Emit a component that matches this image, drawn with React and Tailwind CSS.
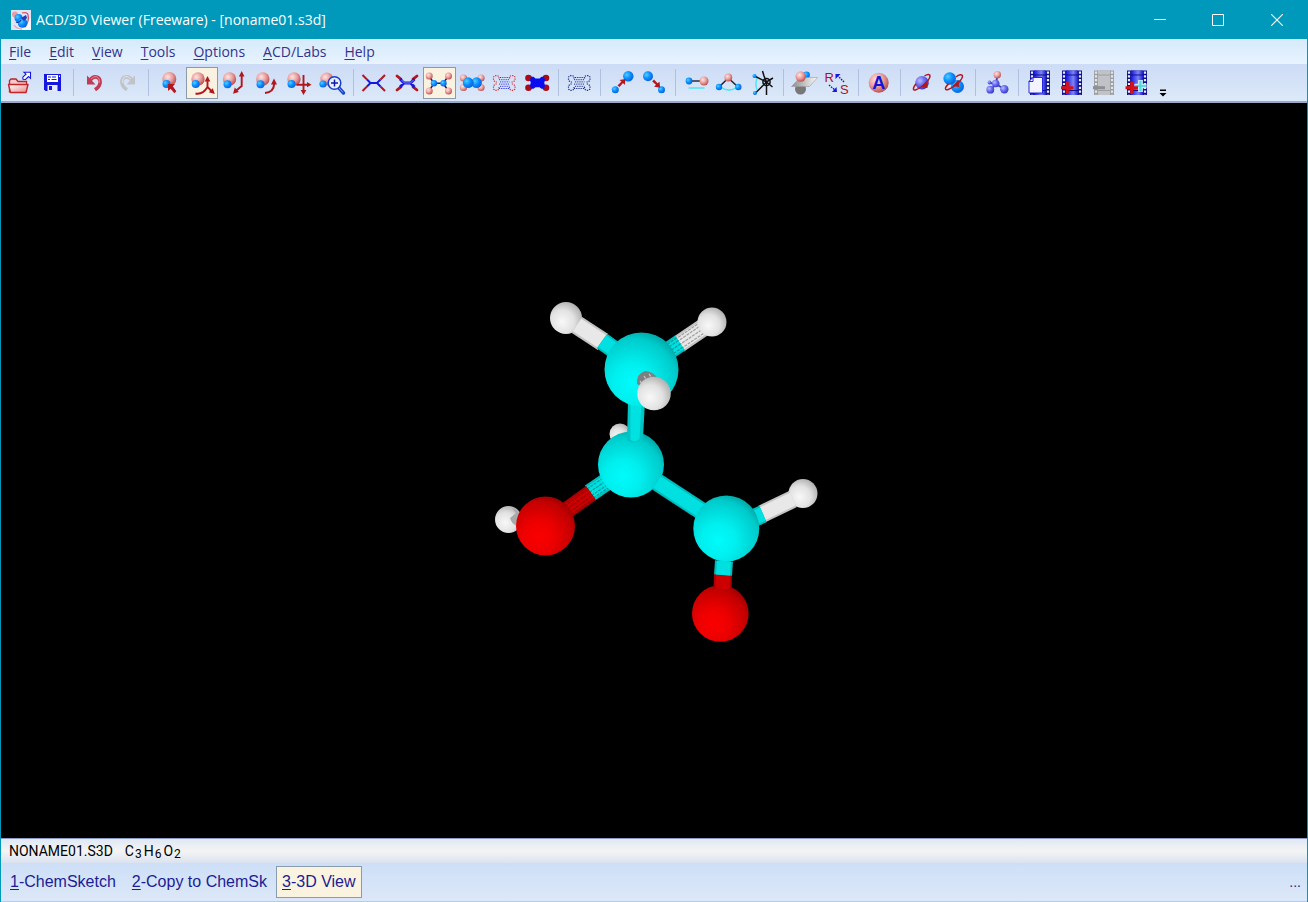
import React from "react";

/* ---------- shared paint ---------- */

function Paints() {
  return (
    <svg width="0" height="0" className="absolute" aria-hidden="true">
      <defs>
        <radialGradient id="pink" cx="0.38" cy="0.35" r="0.7">
          <stop offset="0" stopColor="#fde6e4" />
          <stop offset="0.5" stopColor="#eaa09e" />
          <stop offset="1" stopColor="#b8484a" />
        </radialGradient>
        <radialGradient id="blue" cx="0.35" cy="0.35" r="0.7">
          <stop offset="0" stopColor="#4fd0ff" />
          <stop offset="0.5" stopColor="#0c90ff" />
          <stop offset="1" stopColor="#0b5fd8" />
        </radialGradient>
        <radialGradient id="violet" cx="0.35" cy="0.35" r="0.7">
          <stop offset="0" stopColor="#b9bcff" />
          <stop offset="0.5" stopColor="#6a6cf0" />
          <stop offset="1" stopColor="#3436c4" />
        </radialGradient>
        <linearGradient id="folder" x1="0" y1="0" x2="1" y2="1">
          <stop offset="0" stopColor="#ffffff" />
          <stop offset="1" stopColor="#e98a8a" />
        </linearGradient>
        <linearGradient id="film" x1="0" y1="0" x2="1" y2="0">
          <stop offset="0" stopColor="#1416e0" />
          <stop offset="0.6" stopColor="#7d84f4" />
          <stop offset="1" stopColor="#1a1cd0" />
        </linearGradient>
        <linearGradient id="plane" x1="0" y1="0" x2="1" y2="0">
          <stop offset="0" stopColor="#8c8c8c" />
          <stop offset="1" stopColor="#fafafa" />
        </linearGradient>
        <radialGradient id="carbon" cx="0.38" cy="0.68" r="0.75">
          <stop offset="0" stopColor="#00fbfb" />
          <stop offset="0.35" stopColor="#00efef" />
          <stop offset="0.8" stopColor="#00cbcb" />
          <stop offset="1" stopColor="#009f9f" />
        </radialGradient>
        <radialGradient id="oxygen" cx="0.38" cy="0.68" r="0.75">
          <stop offset="0" stopColor="#fb0000" />
          <stop offset="0.35" stopColor="#ee0000" />
          <stop offset="0.8" stopColor="#c20000" />
          <stop offset="1" stopColor="#960000" />
        </radialGradient>
        <radialGradient id="hydrogen" cx="0.38" cy="0.62" r="0.75">
          <stop offset="0" stopColor="#f8f8f8" />
          <stop offset="0.5" stopColor="#e2e2e2" />
          <stop offset="0.85" stopColor="#b4b4b4" />
          <stop offset="1" stopColor="#8a8a8a" />
        </radialGradient>
      </defs>
    </svg>
  );
}

const RED = "#b3161c";
const BLUE = "#1618e0";

function Ball({ x, y, r, fill = "pink" }) {
  return <circle cx={x} cy={y} r={r} fill={`url(#${fill})`} />;
}

/* ---------- toolbar drawings ---------- */

const OpenIcon = (
  <>
    <path d="M6.5 25.5V13.5l1.5-1.5h5l2 2.5h8.5V17" fill="#f6c9c9" stroke="#b3262a" strokeWidth="1.3" />
    <path d="M5.5 17.5H25l-2 8H7.5z" fill="url(#folder)" stroke="#c0262a" strokeWidth="1.4" strokeLinejoin="round" />
    <path d="M20 12.2l-.2-2 3.2-3-2-1.9h6.5v6l-2-1.8-3 3z" fill="#fff" stroke={BLUE} strokeWidth="1.1" />
  </>
);

const SaveIcon = (
  <>
    <path d="M8 7h17v17H9.500L8 22.500z" fill={BLUE} />
    <rect x="11" y="8" width="11" height="7" fill="#fff" />
    <path d="M12 10h3m1 0h4M12 12.500h2m1.500 0h5" stroke={BLUE} strokeWidth="1.200" />
    <rect x="11.500" y="18" width="10" height="6" fill="#e6ecff" />
    <rect x="13" y="19" width="3" height="4" fill={BLUE} />
    <path d="M23.500 8.500v1.500" stroke="#fff" />
  </>
);

function Turn({ color, shade }) {
  return (
    <>
      <path d="M12 13.500c1.500-2.700 4-4 6.500-3.500 3.700.8 4.500 5 2.800 8.500-.9 1.800-2.300 3-4.300 4.300" fill="none" stroke={shade} strokeWidth="3.600" />
      <path d="M13 12.300c1.500-2 3.500-3 5.500-2.600 2.500.6 3.400 3.300 2.600 6.300" fill="none" stroke={color} strokeWidth="1" />
      <path d="M9 8.500v9h8.500z" fill={shade} />
    </>
  );
}

const UndoIcon = <Turn color="#e08c9c" shade="#c23a54" />;
const RedoIcon = (
  <g transform="translate(33 0) scale(-1 1)">
    <Turn color="#e4e5e7" shade="#c0c3c8" />
  </g>
);

const PickIcon = (
  <>
    <Ball x={16.300} y={12} r={7} />
    <Ball x={13.500} y={17} r={4} fill="blue" />
    <path d="M15 17h7l-2.200 2.300 3.500 5-1.800 2-4-4.600-2.500 2.300z" fill={RED} />
  </>
);

const Rotate3dIcon = (
  <>
    <Ball x={12} y={12} r={6.700} />
    <Ball x={9.700} y={17} r={4} fill="blue" />
    <path d="M21.500 20V12M9.500 26.500c5 1 9-1.500 12-6.500l5 5" fill="none" stroke={RED} strokeWidth="1.900" />
    <path d="M21.500 9l2.800 5.500h-5.600zM28.800 27l-6-1.800 4-4z" fill={RED} />
  </>
);

const RotateXyIcon = (
  <>
    <Ball x={11.500} y={12} r={6.700} />
    <Ball x={9.500} y={17.300} r={4} fill="blue" />
    <path d="M23.700 8v11l-6 5" fill="none" stroke={RED} strokeWidth="1.900" />
    <path d="M23.700 4l2.800 5.500h-5.600zM15 26.800l1.800-6.300 4 4.500z" fill={RED} />
  </>
);

const RotateZIcon = (
  <>
    <Ball x={11.800} y={12} r={6.700} />
    <Ball x={9.500} y={17.300} r={4} fill="blue" />
    <path d="M14 26c6-.5 9-4 9.200-9.500" fill="none" stroke={RED} strokeWidth="2" />
    <path d="M23 11.500l3 6h-6z" fill={RED} />
  </>
);

const MoveIcon = (
  <>
    <Ball x={11} y={12} r={6.700} />
    <Ball x={8.500} y={17} r={4} fill="blue" />
    <path d="M20.500 8v16M13.500 17.700H25" fill="none" stroke={RED} strokeWidth="1.900" />
    <path d="M20.500 28l-2.800-5h5.600zM28.500 17.700l-4.500-2.600v5.200z" fill={RED} />
  </>
);

const ZoomIcon = (
  <>
    <Ball x={10.800} y={12} r={6.500} />
    <Ball x={7} y={17} r={3.600} fill="blue" />
    <path d="M22.500 20.500l5 5.500" stroke="#1840c8" strokeWidth="3.400" strokeLinecap="round" />
    <path d="M23 21l4 4.500" stroke="#6bb8f8" strokeWidth="1" />
    <circle cx="18.500" cy="16" r="6.300" fill="#e6f3ff" stroke="#1a3fd0" strokeWidth="1.500" />
    <path d="M18.500 12.500v7M15 16h7" stroke="#1418a8" strokeWidth="1.500" />
  </>
);

const WireIcon = (
  <g transform="translate(-1 0)">
    <path d="M5.500 8l4.500 4.500M28 8l-4.500 4.500M5.500 24l4.500-4.500M28 24l-4.500-4.500" stroke={RED} strokeWidth="2" />
    <path d="M10 12.500l3.500 3.500h6.500l3.500-3.500M10 19.500l3.500-3.500M20 16l3.500 3.500" fill="none" stroke={BLUE} strokeWidth="2" />
  </g>
);

const SticksIcon = (
  <g transform="translate(-0.5 0)">
    <path d="M6.500 9l4 3.200M26.500 9L22.500 12.200M6.500 23L10.500 19.800M26.500 23L22.500 19.800" stroke={RED} strokeWidth="2.800" strokeLinecap="round" />
    <path d="M9.500 12l4 4h6.500l4-4M9.500 20l4-4M20 16l4 4" fill="none" stroke={BLUE} strokeWidth="2.800" />
    <path d="M11 13l3 3h6l3-3" fill="none" stroke="#98a0f0" strokeWidth="0.800" />
  </g>
);

const BallsIcon = (
  <>
    <path d="M6 9l5 7.300L6 24M25.500 9l-5.500 7.300 5.500 7.700M11 16.300h9" fill="none" stroke="#18206c" strokeWidth="1.500" />
    <Ball x={6.200} y={9} r={3.500} />
    <Ball x={25.500} y={9} r={3.500} />
    <Ball x={6.200} y={24} r={3.500} />
    <Ball x={25.500} y={24} r={3.500} />
    <Ball x={11} y={16.300} r={3.200} fill="blue" />
    <Ball x={20.500} y={16.300} r={3.200} fill="blue" />
  </>
);

const SpaceFillIcon = (
  <>
    <Ball x={7.500} y={11} r={3.600} />
    <Ball x={25} y={11} r={3.600} />
    <Ball x={7.500} y={20.500} r={3.600} />
    <Ball x={25} y={20.500} r={3.600} />
    <Ball x={20.500} y={15.700} r={5.400} fill="blue" />
    <Ball x={12.200} y={15.700} r={5.400} fill="blue" />
  </>
);

function Dots({ corner, middle }) {
  return (
    <g fill="none" strokeWidth="1.200">
      <g stroke={corner} strokeDasharray="1.300 1.100">
        <path d="M11 11.500V9.500L9.500 8.700H7L5.500 10v3l1.500 2h2.500" />
        <path d="M21.500 11.500V9.500L23 8.700h2.500L27 10v3l-1.500 2H23" />
        <path d="M11 20v2L9.500 23.300H7L5.500 22v-3L7 17h2.500" />
        <path d="M21.500 20v2l1.500 1.300h2.500L27 22v-3l-1.500-2H23" />
      </g>
      <path d="M12 10.500h9.500M11 12.700h11M12 14.900h9.500M11 17.100h11M12 19.300h9.500M11 21.500h11" stroke={middle} strokeWidth="1" strokeDasharray="1.200 1" />
    </g>
  );
}

const DotsIcon = <Dots corner="#d8303c" middle="#3038e0" />;
const DotsSurfaceIcon = <Dots corner="#1c2a90" middle="#1c2a90" />;

const DiscsIcon = (
  <>
    <g fill="#a80c18">
      <circle cx="7.500" cy="11" r="3.300" />
      <circle cx="25" cy="11" r="3.300" />
      <circle cx="7.500" cy="20.700" r="3.300" />
      <circle cx="25" cy="20.700" r="3.300" />
    </g>
    <path d="M10 9.800h2.500l2 1.600h4l2-1.600H23l1 3.500-.8 2.400.8 2.500-1 3.500h-2.500l-2-1.500h-4l-2 1.500H10l-1-3.500.8-2.500-.8-2.400z" fill="#0b0bf0" />
  </>
);

const AtomUpIcon = (
  <>
    <Ball x={9.300} y={22.700} r={3.500} fill="blue" />
    <Ball x={22.300} y={9.300} r={5.200} fill="blue" />
    <path d="M11.500 18.500l4-4-2-1.500 6-1-.8 6-1.700-2-3.500 4z" fill={RED} />
  </>
);

const AtomDownIcon = (
  <>
    <Ball x={10} y={9.300} r={5} fill="blue" />
    <Ball x={23.500} y={22.700} r={3.500} fill="blue" />
    <path d="M16 12.500l3.500 3.800 2-1.500.7 6-6-1 1.800-2-3.800-3.300z" fill={RED} />
  </>
);

const LengthIcon = (
  <>
    <path d="M8 14h15" stroke="#222" strokeWidth="1.400" />
    <Ball x={8} y={14} r={3.400} fill="blue" />
    <Ball x={23} y={14} r={4.500} />
    <path d="M7.500 21h16" stroke="#52e4f6" strokeWidth="1.500" />
  </>
);

const AngleIcon = (
  <>
    <path d="M8.500 20.500c5 3.500 10 3.500 15 0" fill="none" stroke="#52e4f6" strokeWidth="1.500" />
    <path d="M6 20l9.300-9L25 20" fill="none" stroke="#222" strokeWidth="1.500" />
    <Ball x={15.300} y={10.500} r={3.900} />
    <Ball x={6} y={20} r={3.200} fill="blue" />
    <Ball x={25.300} y={20} r={3.200} fill="blue" />
  </>
);

const TorsionIcon = (
  <g transform="translate(1 0)">
    <path d="M10 11c-1.500 4.500-1.500 8 0 12" fill="none" stroke="#52e4f6" strokeWidth="1.500" />
    <path d="M7.500 9l12 6-11 11M15.500 4l1.500 5 2.500 6L26 11M19.500 15l6 5M19.500 15v13" fill="none" stroke="#111" strokeWidth="1.500" />
    <circle cx="19.500" cy="15" r="3.600" fill="none" stroke="#111" strokeWidth="1.500" />
    <Ball x={7.500} y={9} r={2} fill="blue" />
    <Ball x={8} y={26} r={2} fill="blue" />
  </g>
);

const MirrorIcon = (
  <>
    <circle cx="12.500" cy="22" r="5.500" fill="#777" />
    <Ball x={18.500} y={8} r={3.400} fill="blue" />
    <path d="M3.500 19.500L12 10.500h17.500L21.500 19.500z" fill="url(#plane)" stroke="#9a9a9a" strokeWidth="0.600" />
    <Ball x={12.700} y={9.500} r={5.200} />
  </>
);

const StereoIcon = (
  <>
    <text x="3.500" y="15" fontSize="13" fill="#b01018" fontFamily="Liberation Sans, sans-serif">R</text>
    <text x="19" y="26.500" fontSize="13" fill="#b01018" fontFamily="Liberation Sans, sans-serif">S</text>
    <path d="M23 15l-6-6M8 18l6 5" stroke={BLUE} strokeWidth="1.400" strokeDasharray="1.600 1" />
    <path d="M14.500 7h5l-5 5zM16 25h-5l4.500-5z" fill={BLUE} />
  </>
);

const NamesIcon = (
  <>
    <Ball x={15.700} y={15.700} r={10} />
    <text x="15.700" y="21.800" fontSize="18" fontWeight="bold" textAnchor="middle" fill="#1414d8" fontFamily="Liberation Sans, sans-serif">A</text>
  </>
);

const SpinIcon = (
  <>
    <Ball x={16} y={15.700} r={6.800} fill="violet" />
    <path d="M18.500 9c3-2 5.500-2 5.500 0 0 3-5 8-9 11-4 2.800-7 4-7.500 2.200-.4-1.600 1-3.500 2.500-5.500" fill="none" stroke={RED} strokeWidth="1.500" />
    <path d="M21 14l.5 7-6.500-1z" fill={RED} />
  </>
);

const SpinPairIcon = (
  <>
    <Ball x={19.500} y={19.500} r={6.500} fill="blue" />
    <Ball x={11.700} y={11.500} r={6.300} fill="blue" />
    <path d="M18 10c3-2.500 6.500-3 6.500-.8 0 3-5 7.500-9 10.500-4 2.800-7.500 4-8 2.200-.4-1.600 1-3 3-5" fill="none" stroke={RED} strokeWidth="1.500" />
    <path d="M20.500 13l.5 7-6.500-1z" fill={RED} />
  </>
);

const OptimizeIcon = (
  <>
    <path d="M16.500 8l-1.500 9-5 5.500M15 17l8 5M15 17l-6-1" fill="none" stroke="#3a3cc0" strokeWidth="1.800" />
    <Ball x={16.300} y={7.700} r={3.700} />
    <Ball x={14.700} y={16.500} r={3.800} fill="violet" />
    <Ball x={9.300} y={22.700} r={3.900} fill="violet" />
    <Ball x={23.300} y={22.300} r={4.200} fill="violet" />
    <Ball x={8.500} y={15.500} r={1.900} fill="violet" />
  </>
);

function Film({ x = 6, gray = false }) {
  const edge = gray ? "#9c9ea2" : "#10108c";
  const notch = gray ? "#e4e6ea" : "#e8ecff";
  return (
    <>
      <rect x={x} y="3.500" width="20" height="24.500" fill={edge} />
      <rect x={x + 4} y="3.500" width="12" height="24.500" fill={gray ? "#c0c2c6" : "url(#film)"} />
      <path d={`M${x + 4} 8h12M${x + 4} 23.500h12`} stroke={edge} strokeWidth="1.200" />
      <path d={`M${x + 2} 4.500v23M${x + 18} 4.500v23`} stroke={notch} strokeWidth="2.200" strokeDasharray="2.200 1.600" />
    </>
  );
}

const MovieNewIcon = (
  <>
    <Film x={7} />
    <path d="M10 10.500h9.500v15.500H6V14.500z" fill="#f2f3fc" stroke={BLUE} strokeWidth="0.900" />
    <path d="M10 10.500v4H6z" fill="#fff" stroke={BLUE} strokeWidth="0.900" />
  </>
);

const MovieAddIcon = (
  <>
    <Film />
    <path d="M11.300 14.500v12.500M5 20.700h12.500" stroke="#d81018" strokeWidth="3" />
  </>
);

const MovieRemoveIcon = (
  <>
    <Film gray />
    <path d="M5 20.700h12" stroke="#8d8f93" strokeWidth="3" />
  </>
);

const MovieAutoIcon = (
  <>
    <Film />
    <path d="M19.500 13v12M13.500 19h12" stroke="#dffcff" strokeWidth="4.600" />
    <path d="M19.500 13.500v11M14 19h11" stroke="#58d8e0" strokeWidth="2.400" />
    <path d="M10.700 14.500v12.500M4.500 20.700H17" stroke="#d81018" strokeWidth="3" />
  </>
);

const TOOL_GROUPS = [
  [["Open", OpenIcon], ["Save", SaveIcon]],
  [["Undo", UndoIcon], ["Redo", RedoIcon]],
  [
    ["Select", PickIcon],
    ["3D Rotate", Rotate3dIcon, true],
    ["Rotate", RotateXyIcon],
    ["Rotate in Plane", RotateZIcon],
    ["Move", MoveIcon],
    ["Zoom", ZoomIcon],
  ],
  [
    ["Wireframe", WireIcon],
    ["Sticks", SticksIcon],
    ["Balls and Sticks", BallsIcon, true],
    ["Spacefill", SpaceFillIcon],
    ["Dots Only", DotsIcon],
    ["Disks", DiscsIcon],
  ],
  [["With Dots", DotsSurfaceIcon]],
  [["Increase Atom", AtomUpIcon], ["Decrease Atom", AtomDownIcon]],
  [["Bond Length", LengthIcon], ["Bond Angle", AngleIcon], ["Torsion Angle", TorsionIcon]],
  [["Mirror", MirrorIcon], ["Invert Center", StereoIcon]],
  [["Atom Names", NamesIcon]],
  [["Auto Rotate", SpinIcon], ["Auto Rotate and Change", SpinPairIcon]],
  [["3D Optimization", OptimizeIcon]],
  [
    ["New Movie", MovieNewIcon],
    ["Add Frame", MovieAddIcon],
    ["Remove Frame", MovieRemoveIcon],
    ["Auto Add Frames", MovieAutoIcon],
  ],
];

function ToolButton({ label, active, children }) {
  return (
    <button
      type="button"
      aria-label={label}
      aria-pressed={!!active}
      className={
        active
          ? "flex h-8 min-w-0 flex-1 items-center justify-center bg-[#faf2e0] outline-1 -outline-offset-1 outline-[#8a9cab]"
          : "flex h-8 min-w-0 flex-1 items-center justify-center"
      }
    >
      <svg viewBox="0 0 32 32" className="size-8 shrink-0" aria-hidden="true">
        {children}
      </svg>
    </button>
  );
}

function Toolbar() {
  return (
    <div role="toolbar" className="flex h-[39px] items-center border-b-2 border-[#9aa9c9] bg-linear-to-b from-[#cddcf6] to-[#dce9f9] pl-0.5">
      <div className="flex w-full max-w-[1150px] items-center">
        {TOOL_GROUPS.map((group, i) => (
          <React.Fragment key={i}>
            {i > 0 && (
              <div className="flex w-2.5 shrink-0 justify-center">
                <div className="h-[27px] w-px bg-[#b0c1e0]" />
              </div>
            )}
            {group.map(([label, icon, active]) => (
              <ToolButton key={label} label={label} active={active}>
                {icon}
              </ToolButton>
            ))}
          </React.Fragment>
        ))}
      </div>
      <button type="button" aria-label="More buttons" className="ml-1 flex h-7 w-3 items-end justify-center">
        <svg viewBox="0 0 8 8" className="size-2" aria-hidden="true">
          <path d="M1 .5h6v1.500H1zM.5 4h7L4 7.500z" fill="#000" />
        </svg>
      </button>
    </div>
  );
}

/* ---------- window parts ---------- */

function AppLogo() {
  return (
    <svg viewBox="0 0 20 20" className="size-5" aria-hidden="true">
      <rect width="20" height="20" fill="#dfe4f6" />
      <path d="M6 20h14V8z" fill="#f6f7fd" />
      <circle cx="4" cy="4.500" r="3" fill="#ee9aa4" />
      <path d="M11 3c3-1 6 0 6 2M17 5c1 4 0 8-3 12" fill="none" stroke="#d05560" strokeWidth="1.300" />
      <path d="M3 15c2 3 5 4 8 4" fill="none" stroke="#e8a4ac" strokeWidth="1.300" />
      <Ball x={7.500} y={8} r={4} fill="blue" />
      <Ball x={11.500} y={13} r={4.800} fill="blue" />
      <path d="M10 8l5-3 1 3-3 3z" fill="#1c3fb4" />
      <path d="M5 12c2 1 4 0 5-2" fill="none" stroke="#123a9c" strokeWidth="1.200" />
    </svg>
  );
}

function TitleBar() {
  return (
    <header className="flex h-[39px] items-center bg-[#0099bc] pl-2.5 text-white">
      <AppLogo />
      <h1 className="ml-[5px] flex-1 text-sm font-normal">ACD/3D Viewer (Freeware) - [noname01.s3d]</h1>
      <button type="button" aria-label="Minimize" className="flex h-full w-[58px] items-center justify-center">
        <svg viewBox="0 0 12 12" className="size-3" aria-hidden="true"><path d="M0 5.500h12" stroke="#fff" /></svg>
      </button>
      <button type="button" aria-label="Maximize" className="flex h-full w-[58px] items-center justify-center">
        <svg viewBox="0 0 12 12" className="size-3" aria-hidden="true"><path d="M.5.500h11v11H.5z" fill="none" stroke="#fff" /></svg>
      </button>
      <button type="button" aria-label="Close" className="flex h-full w-[60px] items-center justify-center">
        <svg viewBox="0 0 12 12" className="size-3" aria-hidden="true"><path d="M0 0l12 12M12 0L0 12" stroke="#fff" strokeWidth="1.100" /></svg>
      </button>
    </header>
  );
}

const MENUS = ["File", "Edit", "View", "Tools", "Options", "ACD/Labs", "Help"];

function MenuBar() {
  return (
    <nav className="flex h-[25px] items-center gap-[18px] bg-linear-to-b from-[#d6eafb] to-[#e8f3ff] pl-2 text-sm text-[#33338c]">
      {MENUS.map((name) => (
        <button key={name} type="button">
          <span className="underline underline-offset-2">{name[0]}</span>
          {name.slice(1)}
        </button>
      ))}
    </nav>
  );
}

/* Bond drawn as a tube; ribs give the faceted look of foreshortened bonds. */
function Bond({ from, to, w = 17, color, ribs }) {
  const pts = { x1: from[0], y1: from[1], x2: to[0], y2: to[1] };
  const len = Math.hypot(to[0] - from[0], to[1] - from[1]);
  const nx = -(to[1] - from[1]) / len;
  const ny = (to[0] - from[0]) / len;
  const tones = {
    c: ["#00bcbc", "#00e0e0", "#008c8c"],
    o: ["#a80000", "#cc0000", "#8c0000"],
    h: ["#c4c4c4", "#e8e8e8", "#8c8c8c"],
  }[color];
  return (
    <g>
      <line {...pts} stroke={tones[0]} strokeWidth={w} />
      <line {...pts} stroke={tones[1]} strokeWidth={w - 4} />
      {ribs &&
        [-5, -1, 3, 6].map((d) => (
          <line
            key={d}
            x1={from[0] + nx * d}
            y1={from[1] + ny * d}
            x2={to[0] + nx * d}
            y2={to[1] + ny * d}
            stroke={tones[2]}
            strokeWidth="1.200"
            strokeDasharray="3 1"
            opacity="0.8"
          />
        ))}
    </g>
  );
}

function Molecule() {
  return (
    <svg viewBox="490 298 328 344" className="h-[344px] w-[328px]" role="img" aria-label="Molecule model">
      <Ball x={620} y={433} r={10.500} fill="hydrogen" />
      <Ball x={508.500} y={518.500} r={13.500} fill="hydrogen" />
      <path d="M512 507q6 2 8 8l-3 10q-6-3-7-8 4-3 6-5z" fill="#a8a8a8" />

      <Bond from={[590, 492]} to={[631, 464]} w={18} color="c" ribs />
      <Bond from={[545, 525]} to={[591, 492]} w={17} color="o" ribs />
      <Ball x={545.500} y={525} r={29.500} fill="oxygen" />

      <Bond from={[704, 326]} to={[679, 343]} w={18} color="h" ribs />
      <Bond from={[680, 342]} to={[645, 366]} w={18} color="c" ribs />
      <Ball x={712} y={321} r={14.500} fill="hydrogen" />

      <Ball x={566} y={317} r={16} fill="hydrogen" />
      <Bond from={[577, 324]} to={[603, 341]} w={19} color="h" />
      <Bond from={[602, 340]} to={[641, 368]} w={18} color="c" />

      <Ball x={631} y={463.500} r={33} fill="carbon" />
      <path d="M628 400h17l-2 37q-7 8-16 2z" fill="#00c4c4" />
      <path d="M630.500 400h11l-2 38q-5 4-9 1z" fill="#00e2e2" />
      <Ball x={641.500} y={368.500} r={37} fill="carbon" />

      <path d="M637 383q-1-10 8-13 8 0 13 8l-6 12z" fill="#7d8080" />
      <path d="M640 380l8 10M644 375l8 12M649 373l7 9" stroke="#c4c4c4" strokeWidth="1.300" strokeDasharray="3 1" />
      <Ball x={654} y={392.500} r={16.800} fill="hydrogen" />

      <Bond from={[657, 481]} to={[706, 513]} w={18} color="c" />
      <Ball x={803} y={492.500} r={14.500} fill="hydrogen" />
      <Bond from={[793, 498]} to={[762, 513]} w={18} color="h" />
      <Bond from={[763, 513]} to={[740, 523]} w={18} color="c" />
      <Ball x={726.300} y={527.500} r={33} fill="carbon" />

      <Ball x={720.300} y={612.500} r={28.300} fill="oxygen" />
      <Bond from={[722.500, 588]} to={[723, 573]} w={18} color="o" />
      <Bond from={[723, 574]} to={[724, 560]} w={18} color="c" />
    </svg>
  );
}

function StatusBar() {
  return (
    <div className="flex h-[25px] items-center gap-3 border-t border-[#8c9cc0] bg-linear-to-b from-[#e0e8f4] via-[#f4f4f4] to-[#dbe3f0] pl-2 font-[Roboto,sans-serif] text-sm text-black">
      <span>NONAME01.S3D</span>
      <span className="flex items-center gap-px">
        {[["C", 3], ["H", 6], ["O", 2]].map(([el, n]) => (
          <span key={el} className="flex items-baseline gap-px">
            {el}
            <span className="relative top-0.5 pr-px text-xs">{n}</span>
          </span>
        ))}
      </span>
    </div>
  );
}

const VIEWS = [
  ["1", "-ChemSketch"],
  ["2", "-Copy to ChemSk"],
  ["3", "-3D View"],
];

function ViewTabs() {
  return (
    <footer className="flex h-[39px] items-center gap-0.5 border-b border-[#b4cbee] bg-linear-to-b from-[#cddff7] to-[#dce8f8] pl-0.5 font-['Liberation_Sans',sans-serif] text-base text-[#1c1c94]">
      {VIEWS.map(([key, rest]) => (
        <button
          key={key}
          type="button"
          className={
            key === "3"
              ? "h-8 border border-[#8a9cab] bg-[#faf3e0] px-[5px]"
              : "h-8 border border-transparent px-[6px]"
          }
        >
          <span className="underline underline-offset-2">{key}</span>
          {rest}
        </button>
      ))}
      <button type="button" aria-label="More" className="ml-auto pr-1.5 text-sm">...</button>
    </footer>
  );
}

export default function App() {
  return (
    <div className="flex min-h-screen flex-col border-x border-[#0099bc] bg-[#cddff7] font-['Open_Sans',sans-serif]">
      <Paints />
      <TitleBar />
      <MenuBar />
      <Toolbar />
      <main className="flex flex-1 items-center justify-center bg-black">
        <Molecule />
      </main>
      <StatusBar />
      <ViewTabs />
    </div>
  );
}
